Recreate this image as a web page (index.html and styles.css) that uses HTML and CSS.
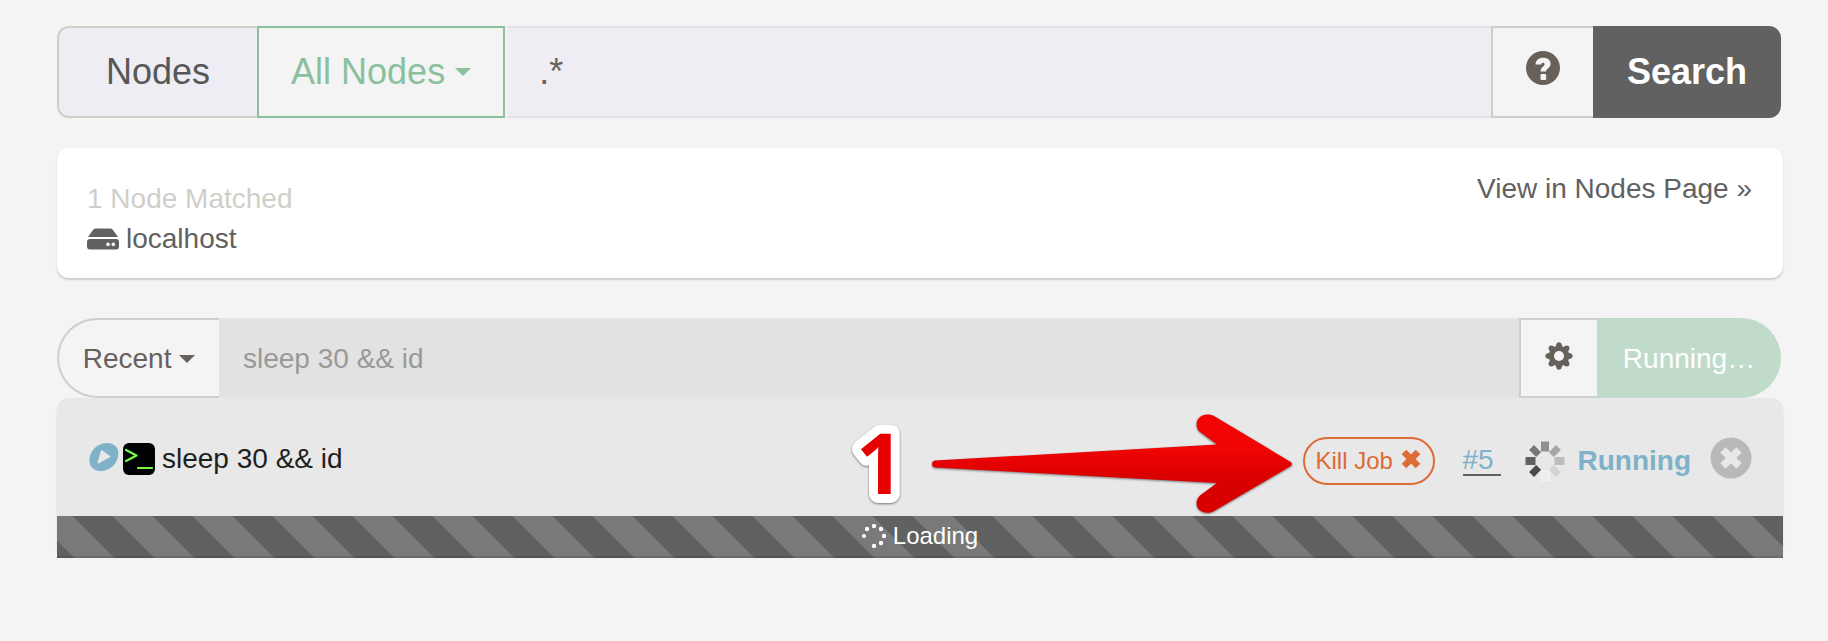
FILE: index.html
```html
<!DOCTYPE html>
<html lang="en">
<head>
<meta charset="utf-8">
<title>Commands</title>
<link rel="stylesheet" href="styles.css">
</head>
<body>
<main class="page">
  <form class="group group-search">
    <label class="addon" for="filter">Nodes</label>
    <button type="button" class="btn btn-filter">All Nodes <span class="caret"></span></button>
    <input class="field field-filter" id="filter" type="text" value=".*">
    <button type="button" class="btn btn-help" aria-label="Help">
      <svg class="icon-help" viewBox="0 0 34 34" aria-hidden="true"><circle cx="17" cy="17" r="17" fill="#66615b"/><path d="M9.500 13.500C9.800 9.200 12.600 6.800 17.200 6.800C21.800 6.800 24.600 9.300 24.600 12.900C24.600 17 20.300 17 20.100 20.600H14.600C14.600 16 18.600 15.500 18.600 13.300C18.600 12.300 18 11.800 17 11.800C15.900 11.800 15.300 12.500 15.300 13.500Z" fill="#f4f4f4"/><rect x="14.500" y="23" width="5.700" height="6" rx="1" fill="#f4f4f4"/></svg>
    </button>
    <button type="button" class="btn btn-search">Search</button>
  </form>

  <section class="card matched">
    <div>
      <div class="matched-count">1 Node Matched</div>
      <a class="node" href="#"><svg class="icon-node" viewBox="0 0 32 22" aria-hidden="true"><path d="M8.500 0.500H23.500Q25 0.500 26 2L31 9H1L6 2Q7 0.500 8.500 0.500Z" fill="#616161"/><path fill-rule="evenodd" d="M3 11H29Q32 11 32 14V18.500Q32 21.500 29 21.500H3Q0 21.500 0 18.500V14Q0 11 3 11ZM21 14.500a1.800 1.800 0 1 0 .01 0ZM26.300 14.500a1.800 1.800 0 1 0 .01 0Z" fill="#616161"/></svg>localhost</a>
    </div>
    <a class="view" href="#">View in Nodes Page »</a>
  </section>

  <form class="group group-run">
    <button type="button" class="btn btn-recent">Recent <span class="caret"></span></button>
    <input class="field field-command" type="text" aria-label="Command" value="sleep 30 &amp;&amp; id" disabled>
    <button type="button" class="btn btn-gear" aria-label="Settings">
      <svg class="icon-gear" viewBox="-14 -14 28 28" aria-hidden="true"><g fill="#66615b"><path id="cog" d="M-4 -8L-2.300 -12.500Q0 -15 2.300 -12.500L4 -8V8L2.300 12.500Q0 15 -2.300 12.500L-4 8Z"/><use href="#cog" transform="rotate(45)"/><use href="#cog" transform="rotate(90)"/><use href="#cog" transform="rotate(135)"/><circle r="10"/></g><circle r="5" fill="#f4f4f4"/></svg>
    </button>
    <button type="button" class="btn btn-run" disabled>Running…</button>
  </form>

  <section class="run">
    <div class="run-head">
      <div class="run-name">
        <svg class="icon-play" viewBox="0 0 30 28" aria-hidden="true"><path d="M0.500 16.500C0.800 7 9 0 18 0C25 0 29.500 4 29.300 11C29 20 21.500 28 12 28C4.500 28 0.300 24 0.500 16.500Z" fill="#7fb1c9"/><path d="M12 7.500Q12.500 7 13 7.300L21 13Q21.600 13.600 21 14.200L9.500 20.500Q8.300 20.900 8.500 19.500Z" fill="#e8e8e8"/></svg>
        <svg class="icon-term" viewBox="0 0 32 32" aria-hidden="true"><rect width="32" height="32" rx="6"/><path d="M3 7L13.500 12.500L3 18M15 25H29" fill="none" stroke="#72fb4b" stroke-width="2.200" stroke-linecap="round" stroke-linejoin="round"/></svg>
        <span>sleep 30 &amp;&amp; id</span>
      </div>
      <button type="button" class="btn btn-kill">Kill Job <svg class="icon-x" viewBox="0 0 20 20" aria-hidden="true"><path d="M3 3L17 17M17 3L3 17" stroke="#dc6b35" stroke-width="6.500"/></svg></button>
      <a class="job" href="#">#5 </a>
      <svg class="icon-spin" viewBox="-20 -20 40 40" aria-hidden="true"><rect x="-4" y="-19.500" width="8" height="10" fill="#8f8f8f"/><rect x="-3.500" y="-19" width="7" height="10" fill="#a5a5a5" transform="rotate(45)"/><rect x="-4" y="-19.500" width="8" height="10" fill="#bdbdbd" transform="rotate(90)"/><rect x="-3.500" y="-19" width="7" height="10" fill="#d4d4d4" transform="rotate(135)"/><rect x="-4" y="-19.500" width="8" height="10" fill="#eee" stroke="#f4f4f4" transform="rotate(180)"/><rect x="-3.500" y="-19" width="7" height="10" fill="#484848" transform="rotate(225)"/><rect x="-4" y="-19.500" width="8" height="10" fill="#616161" transform="rotate(270)"/><rect x="-3.500" y="-19" width="7" height="10" fill="#777" transform="rotate(315)"/></svg>
      <span class="status">Running</span>
      <button type="button" class="btn btn-close" aria-label="Close"><svg class="icon-close" viewBox="0 0 42 42" aria-hidden="true"><circle cx="21" cy="21" r="20.500" fill="#b9b9b9"/><path d="M13 13L29 29M29 13L13 29" stroke="#e8e8e8" stroke-width="7.500"/></svg></button>

      <div class="callout">
        <svg class="callout-number" viewBox="0 0 60 90"><text x="5" y="75">1</text></svg>
        <svg class="callout-arrow" viewBox="0 0 364 102" aria-hidden="true">
          <defs><linearGradient id="red" x1="0" y1="0" x2="0" y2="1"><stop offset="0.350" stop-color="#f10404"/><stop offset="0.650" stop-color="#d90000"/></linearGradient></defs>
          <path d="M4 47.500L286 31.500L269 19C265 16 264.500 9 267.500 5.500C271 1 278 0.500 283 3L359 48.500Q363 51 359 53.500L283 98C278 101 271 100 267.500 96C264.500 92.500 265 86 269 82.500L286 70L4 54.500Q1 54 1 51Q1 48 4 47.500Z" fill="url(#red)"/>
        </svg>
      </div>
    </div>
    <div class="progress">
      <svg class="icon-load" viewBox="-12 -12 24 24" aria-hidden="true"><g fill="#fff"><circle cy="-10" r="2.200"/><circle cx="7" cy="-7" r="2.200"/><circle cx="10" r="2.200"/><circle cx="7" cy="7" r="2.200"/><circle cy="10" r="2.200"/><circle cx="-7" cy="-7" r="2.200"/><circle cx="-10" r="2"/></g></svg>
      <span>Loading</span>
    </div>
  </section>
</main>
</body>
</html>
```
FILE: styles.css
```css
* { box-sizing: border-box; }

body {
  margin: 0;
  background: #f4f4f4;
  color: #616161;
  font: 28px/40px "Liberation Sans", Arial, sans-serif;
}

.page { padding: 26px 45px 0 57px; }

.group {
  display: flex;
  margin: 0 2px 0 0;
}

.group-search { height: 92px; font-size: 36px; }
.group-run { height: 80px; }

.btn {
  display: flex;
  flex: none;
  align-items: center;
  justify-content: center;
  margin: 0;
  padding: 0;
  border: 2px solid #cfcfca;
  background: #f4f4f4;
  color: #66615b;
  font: inherit;
  white-space: pre;
}

.caret {
  border: 8px solid transparent;
  border-top-color: currentColor;
  border-bottom: 0;
}

.addon {
  display: flex;
  align-items: center;
  padding: 0 47px;
  border: 2px solid #cfcfca;
  border-right: 0;
  border-radius: 12px 0 0 12px;
  background: #eeedf3;
  color: #575757;
}

.field {
  flex: 1;
  min-width: 0;
  margin: 0;
  border: solid #e3e3e8;
  border-width: 2px 0;
  border-radius: 0;
  font: inherit;
}

.btn-filter {
  padding: 0 32px;
  border-color: #8bc09e;
  color: #8bc09e;
}

.field-filter {
  margin-left: 2px;
  padding: 0 32px;
  background: #eeedf3;
  color: #66615b;
}

.btn-help { width: 102px; border-right: 0; }
.icon-help { width: 34px; height: 34px; margin-bottom: 8px; }

.btn-search {
  padding: 0 34px;
  border: 0;
  border-radius: 0 12px 12px 0;
  background: #616161;
  color: #fff;
  font-weight: bold;
}

.card {
  border-radius: 12px;
  background: #fff;
  box-shadow: 0 2px 2px #cccccc;
}

.matched {
  display: flex;
  justify-content: space-between;
  margin: 30px 0 40px;
  padding: 21px 31px 19px 30px;
}

.matched-count { margin-top: 10px; color: #cfcfca; }

.node {
  display: flex;
  align-items: center;
  gap: 7px;
  color: #616161;
  text-decoration: none;
}

.icon-node { width: 32px; height: 22px; }
.view { color: #616161; text-decoration: none; }

.btn-recent {
  padding: 0 24px;
  width: 162px;
  border-right: 0;
  border-radius: 40px 0 0 40px;
}

.field-command {
  padding: 2px 24px 0;
  background: #e2e2e2;
  color: #999;
}

.btn-gear { width: 78px; border-right: 0; }
.icon-gear { width: 28px; height: 28px; margin-bottom: 4px; }

.btn-run {
  width: 184px;
  border: 0;
  border-radius: 0 40px 40px 0;
  background: #c0dbca;
  color: #fff;
}

.btn-recent,
.btn-run { padding-top: 2px; }

.run {
  border-radius: 12px;
  background: #e8e8e8;
  box-shadow: 0 2px 2px #d4d4d4;
}

.run-head {
  position: relative;
  display: flex;
  align-items: center;
  height: 118px;
  padding: 8px 31px 0 32px;
}

.run-name {
  display: flex;
  flex: 1;
  align-items: center;
  margin-bottom: 4px;
  color: #1f1f1f;
}

.run-name span { margin-left: 7px; }
.icon-play { width: 30px; height: 28px; margin: 0 4px 4px 0; }
.icon-term { width: 32px; height: 32px; }

.btn-kill {
  height: 48px;
  padding: 0 12px 0 10px;
  border-color: #dc6b35;
  border-radius: 24px;
  background: transparent;
  color: #dc6b35;
  font-size: 24px;
}

.icon-x { width: 20px; height: 20px; margin: 0 0 4px 1px; }

.job {
  margin: 0 24px 0 28px;
  border-bottom: 2px solid #616161;
  color: #7fb1c9;
  line-height: 28px;
  text-decoration: none;
  white-space: pre;
}

.icon-spin { width: 40px; height: 40px; margin-right: 12px; }
.status { color: #7fb1c9; font-weight: bold; }

.btn-close {
  margin: 0 0 6px 19px;
  border: 0;
  background: transparent;
}

.icon-close { width: 42px; height: 42px; }

.callout {
  position: absolute;
  top: 15px;
  right: 488px;
  display: flex;
  align-items: center;
}

.callout-number {
  width: 60px;
  height: 90px;
  margin-right: 20px;
  overflow: visible;
  fill: #e60000;
  stroke: #fff;
  stroke-width: 18px;
  stroke-linejoin: round;
  paint-order: stroke fill;
  font: bold 84px "Open Sans", sans-serif;
  filter: drop-shadow(0 1px 1px #777);
}

.callout-arrow {
  width: 364px;
  height: 102px;
  filter: drop-shadow(0 1px 1px #777);
}

.progress {
  display: flex;
  align-items: center;
  justify-content: center;
  gap: 7px;
  height: 42px;
  padding-bottom: 2px;
  background: linear-gradient(45deg, #797979 25%, #616161 25%, #616161 50%, #797979 50%, #797979 75%, #616161 75%) -24px 0 / 80px 80px;
  box-shadow: inset 0 -2px 0 rgba(0, 0, 0, 0.12);
  color: #fff;
  font-size: 24px;
}

.icon-load { width: 24px; height: 24px; }
```
